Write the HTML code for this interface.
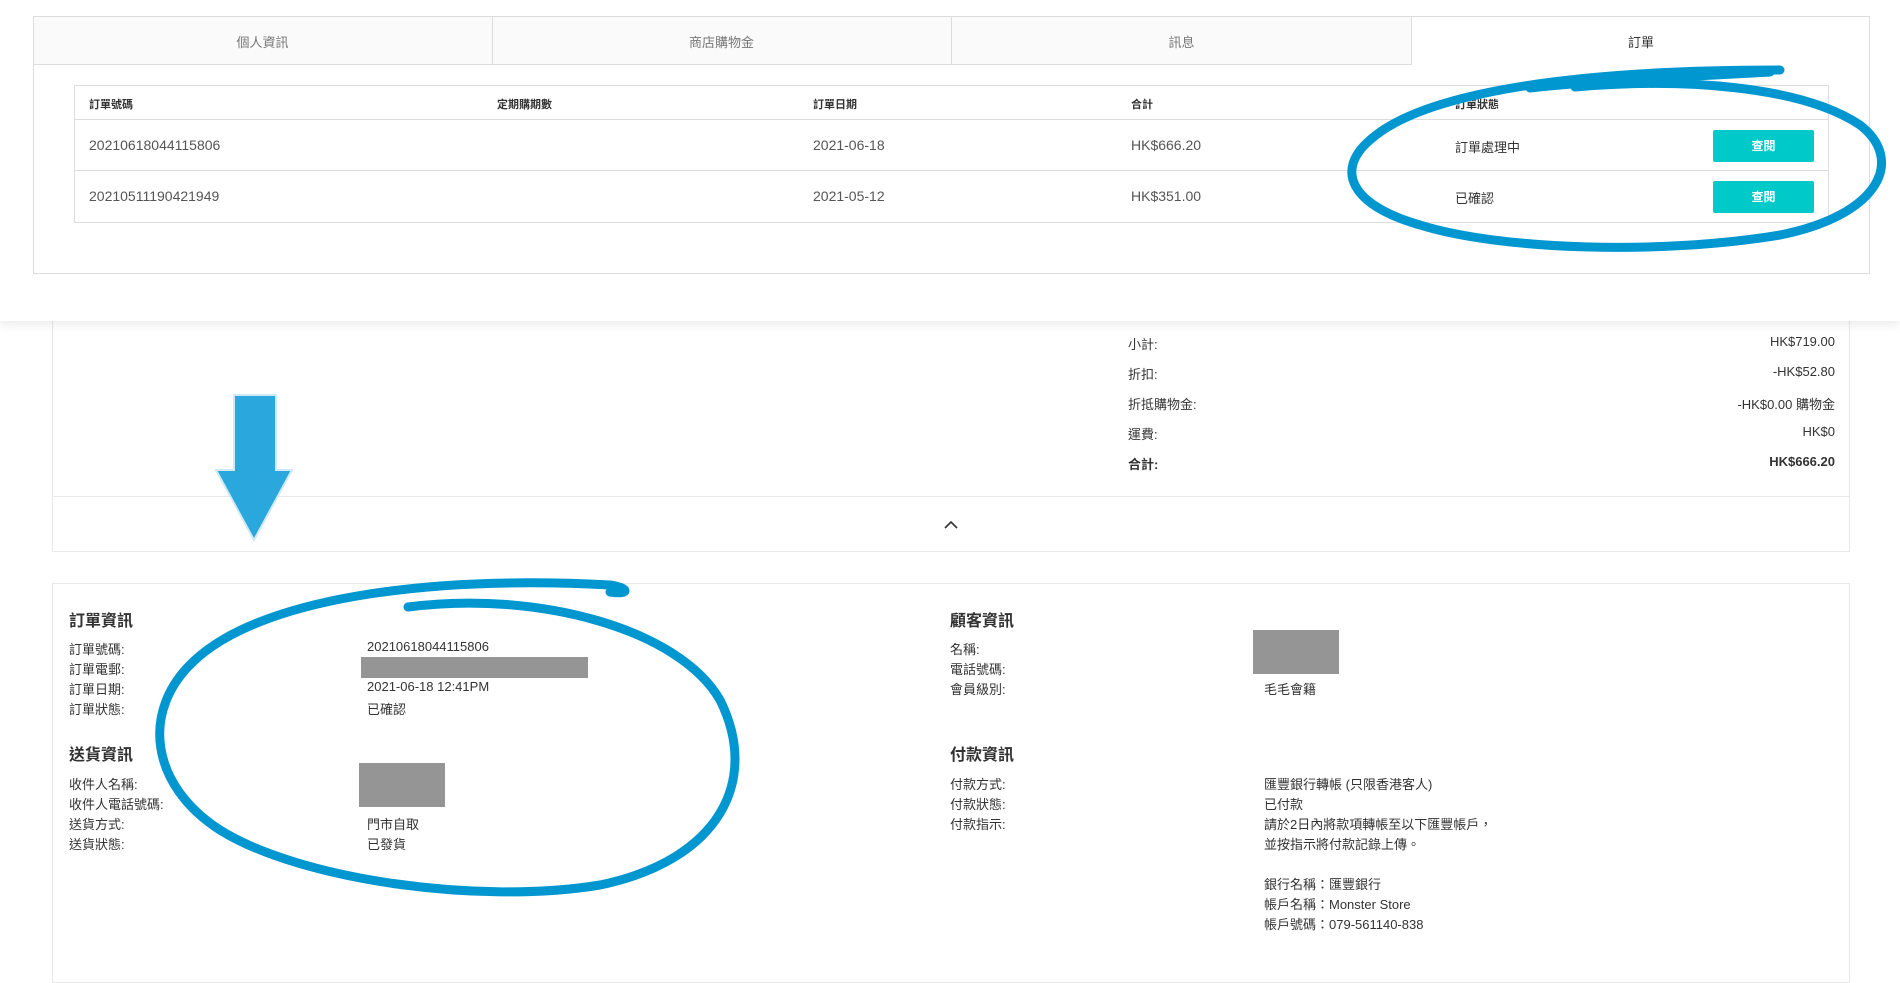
<!DOCTYPE html>
<html><head><meta charset="utf-8"><style>
*{box-sizing:border-box;margin:0;padding:0}
body{width:1900px;height:920px;overflow:hidden;background:#fff;font-family:"Liberation Sans","Noto Sans CJK TC",sans-serif;color:#333;font-size:13px;position:relative}
.abs{position:absolute}
.card{position:absolute;left:52px;width:1798px;border:1px solid #e8e8e8;background:#fff}
.lbl{position:absolute;font-size:13px;color:#333;white-space:nowrap}
.h{position:absolute;font-size:16px;font-weight:bold;color:#333}
.gray{position:absolute;background:#959595}
</style></head><body>

<!-- lower card 1 -->
<div class="card" style="top:250px;height:302px"></div>
<div class="abs" style="left:52px;top:496px;width:1798px;border-top:1px solid #e8e8e8"></div>
<svg class="abs" style="left:943px;top:519px" width="16" height="12"><path d="M2 9 L8 3 L14 9" fill="none" stroke="#333" stroke-width="1.6"/></svg>
<div class="lbl" style="left:1128px;top:334px">小計:</div><div class="lbl" style="right:65px;top:334px">HK$719.00</div>
<div class="lbl" style="left:1128px;top:364px">折扣:</div><div class="lbl" style="right:65px;top:364px">-HK$52.80</div>
<div class="lbl" style="left:1128px;top:394px">折抵購物金:</div><div class="lbl" style="right:65px;top:394px">-HK$0.00 購物金</div>
<div class="lbl" style="left:1128px;top:424px">運費:</div><div class="lbl" style="right:65px;top:424px">HK$0</div>
<div class="lbl" style="left:1128px;top:454px;font-weight:bold">合計:</div><div class="lbl" style="right:65px;top:454px;font-weight:bold">HK$666.20</div>

<!-- lower card 2 -->
<div class="card" style="top:583px;height:400px"></div>
<div class="h" style="left:69px;top:607px">訂單資訊</div>
<div class="lbl" style="left:69px;top:639px">訂單號碼:</div><div class="lbl" style="left:367px;top:639px">20210618044115806</div>
<div class="lbl" style="left:69px;top:659px">訂單電郵:</div>
<div class="lbl" style="left:69px;top:679px">訂單日期:</div><div class="lbl" style="left:367px;top:679px">2021-06-18 12:41PM</div>
<div class="lbl" style="left:69px;top:699px">訂單狀態:</div><div class="lbl" style="left:367px;top:699px">已確認</div>
<div class="gray" style="left:361px;top:657px;width:227px;height:21px"></div>
<div class="h" style="left:69px;top:741px">送貨資訊</div>
<div class="lbl" style="left:69px;top:774px">收件人名稱:</div>
<div class="lbl" style="left:69px;top:794px">收件人電話號碼:</div>
<div class="lbl" style="left:69px;top:814px">送貨方式:</div><div class="lbl" style="left:367px;top:814px">門市自取</div>
<div class="lbl" style="left:69px;top:834px">送貨狀態:</div><div class="lbl" style="left:367px;top:834px">已發貨</div>
<div class="gray" style="left:359px;top:763px;width:86px;height:44px"></div>

<div class="h" style="left:950px;top:607px">顧客資訊</div>
<div class="lbl" style="left:950px;top:639px">名稱:</div>
<div class="lbl" style="left:950px;top:659px">電話號碼:</div>
<div class="lbl" style="left:950px;top:679px">會員級別:</div><div class="lbl" style="left:1264px;top:679px">毛毛會籍</div>
<div class="gray" style="left:1253px;top:630px;width:86px;height:44px"></div>
<div class="h" style="left:950px;top:741px">付款資訊</div>
<div class="lbl" style="left:950px;top:774px">付款方式:</div><div class="lbl" style="left:1264px;top:774px">匯豐銀行轉帳 (只限香港客人)</div>
<div class="lbl" style="left:950px;top:794px">付款狀態:</div><div class="lbl" style="left:1264px;top:794px">已付款</div>
<div class="lbl" style="left:950px;top:814px">付款指示:</div><div class="lbl" style="left:1264px;top:814px">請於2日內將款項轉帳至以下匯豐帳戶，</div>
<div class="lbl" style="left:1264px;top:834px">並按指示將付款記錄上傳。</div>
<div class="lbl" style="left:1264px;top:874px">銀行名稱：匯豐銀行</div>
<div class="lbl" style="left:1264px;top:894px">帳戶名稱：Monster Store</div>
<div class="lbl" style="left:1264px;top:914px">帳戶號碼：079-561140-838</div>

<!-- top overlay panel -->
<div class="abs" style="left:0;top:0;width:1900px;height:321px;background:#fff;box-shadow:0 4px 10px rgba(0,0,0,0.08)"></div>
<div class="abs" style="left:33px;top:16px;width:1837px;height:258px;border:1px solid #ddd;background:#fff"></div>
<div class="abs" style="left:33px;top:16px;width:1379px;height:49px;background:#fafafa;border:1px solid #ddd"></div>
<div class="abs" style="left:492px;top:16px;height:48px;border-left:1px solid #ddd"></div>
<div class="abs" style="left:951px;top:16px;height:48px;border-left:1px solid #ddd"></div>
<div class="lbl" style="left:33px;top:32px;width:459px;text-align:center;color:#777">個人資訊</div>
<div class="lbl" style="left:492px;top:32px;width:459px;text-align:center;color:#777">商店購物金</div>
<div class="lbl" style="left:951px;top:32px;width:461px;text-align:center;color:#777">訊息</div>
<div class="lbl" style="left:1412px;top:32px;width:458px;text-align:center;color:#333">訂單</div>

<div class="abs" style="left:74px;top:85px;width:1755px;height:138px;border:1px solid #ddd"></div>
<div class="abs" style="left:74px;top:119px;width:1755px;border-top:1px solid #ddd"></div>
<div class="abs" style="left:74px;top:170px;width:1755px;border-top:1px solid #ddd"></div>
<div class="lbl" style="left:89px;top:96px;font-size:11px;font-weight:bold">訂單號碼</div>
<div class="lbl" style="left:497px;top:96px;font-size:11px;font-weight:bold">定期購期數</div>
<div class="lbl" style="left:813px;top:96px;font-size:11px;font-weight:bold">訂單日期</div>
<div class="lbl" style="left:1131px;top:96px;font-size:11px;font-weight:bold">合計</div>
<div class="lbl" style="left:1455px;top:96px;font-size:11px;font-weight:bold">訂單狀態</div>
<div class="lbl" style="left:89px;top:137px;font-size:14px;color:#555">20210618044115806</div>
<div class="lbl" style="left:813px;top:137px;font-size:14px;color:#555">2021-06-18</div>
<div class="lbl" style="left:1131px;top:137px;font-size:14px;color:#555">HK$666.20</div>
<div class="lbl" style="left:1455px;top:137px;font-size:13px">訂單處理中</div>
<div class="lbl" style="left:89px;top:188px;font-size:14px;color:#555">20210511190421949</div>
<div class="lbl" style="left:813px;top:188px;font-size:14px;color:#555">2021-05-12</div>
<div class="lbl" style="left:1131px;top:188px;font-size:14px;color:#555">HK$351.00</div>
<div class="lbl" style="left:1455px;top:188px;font-size:13px">已確認</div>
<div class="abs" style="left:1713px;top:130px;width:101px;height:32px;background:#00c9c9;border-radius:2px;color:#fff;font-weight:bold;font-size:12px;text-align:center;line-height:32px">查閱</div>
<div class="abs" style="left:1713px;top:181px;width:101px;height:32px;background:#00c9c9;border-radius:2px;color:#fff;font-weight:bold;font-size:12px;text-align:center;line-height:32px">查閱</div>

<!-- annotations -->
<svg class="abs" style="left:0;top:0" width="1900" height="920">
<g fill="none" stroke="#0096d0" stroke-linecap="round" stroke-width="9">
<path d="M1575 87 C1680 78 1800 85 1860 125 C1905 160 1880 215 1780 235 C1660 255 1500 250 1420 225 C1350 205 1335 170 1370 140 C1420 95 1560 70 1780 70"/>
<path d="M1530 88 C1600 80 1720 75 1770 72"/>
<path d="M408 607 C540 590 680 630 720 700 C760 780 720 860 600 885 C480 905 300 880 220 830 C150 785 140 710 195 660 C260 600 420 575 610 585 C630 588 630 595 610 592"/>
</g>
<path d="M234 395 L276 395 L276 470 L292 470 L254 540 L216 470 L234 470 Z" fill="#2aa7dd" stroke="#cfe9f5" stroke-width="2"/>
</svg>
</body></html>
